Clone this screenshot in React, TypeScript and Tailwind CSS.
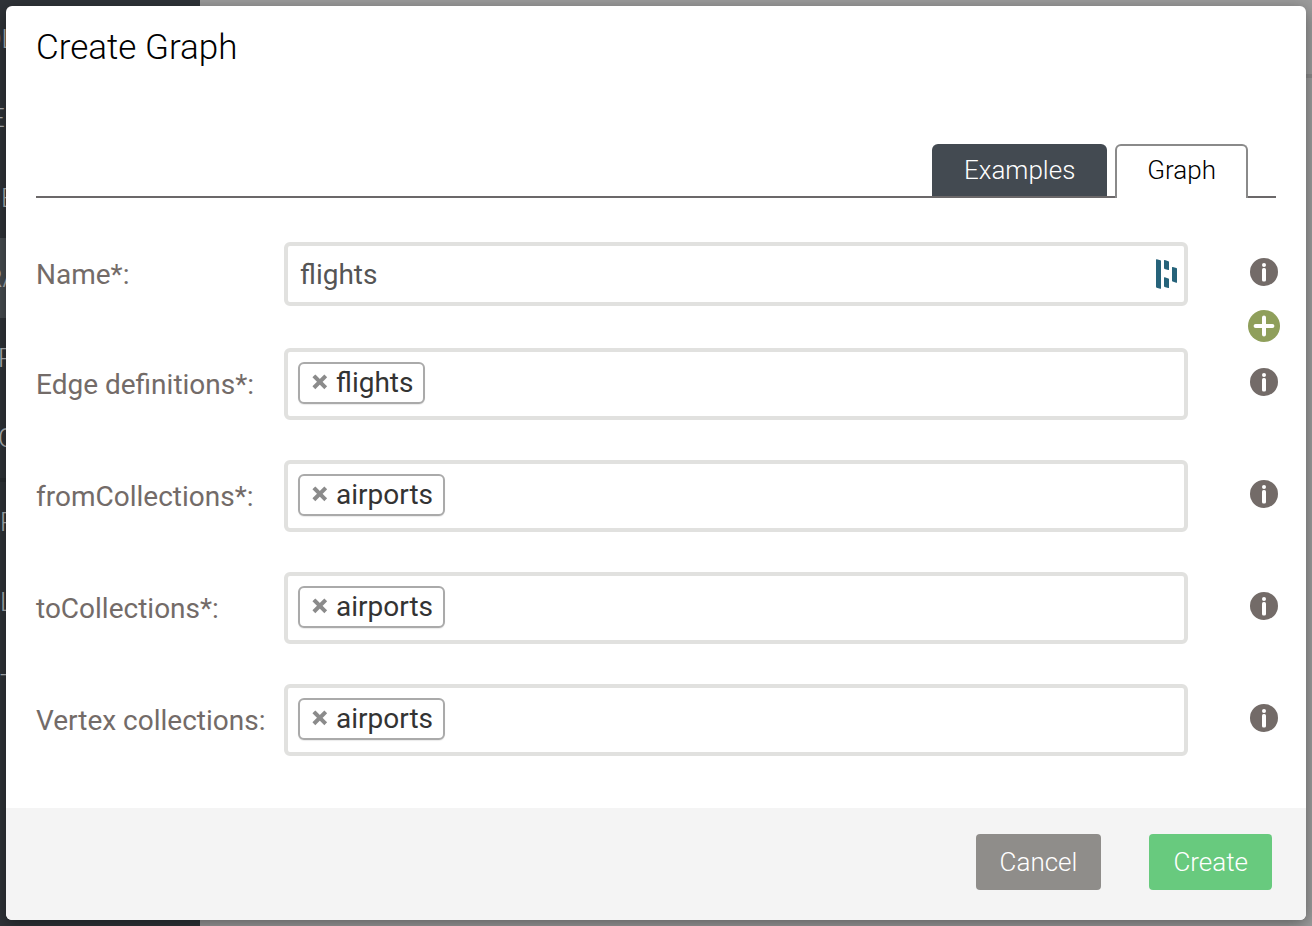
import { useState } from 'react';

const edgeItems = [
  { text: 'OL', row: 'h-[78px]', shift: '-ml-4' },
  { text: 'E', row: 'h-20', shift: '-ml-[10px]' },
  { text: 'UE', row: 'h-20', shift: '-ml-4' },
  { text: 'RA', row: 'h-20 bg-[#474c50]', shift: '-ml-[14px]' },
  { text: 'R', row: 'h-20', shift: '-ml-[2px]' },
  { text: 'O', row: 'h-20', shift: '-ml-[2px]' },
  { text: 'R', row: 'h-[84px] border-t-4 border-[#282c30]', shift: '' },
  { text: 'L', row: 'h-20', shift: '' },
  { text: 'T', row: 'h-[84px]', shift: '' },
];

const tagFields = [
  { id: 'edge', label: 'Edge definitions*:', tag: 'flights' },
  { id: 'from', label: 'fromCollections*:', tag: 'airports' },
  { id: 'to', label: 'toCollections*:', tag: 'airports' },
  { id: 'vertex', label: 'Vertex collections:', tag: 'airports' },
];

function InfoIcon() {
  return (
    <svg viewBox="0 0 28 28" className="mx-[2px] block size-7" aria-hidden="true">
      <circle cx="14" cy="14" r="14" fill="#736b68" />
      <circle cx="14" cy="7" r="2" fill="#fff" />
      <rect x="12" y="10" width="4" height="13.5" rx="1.6" fill="#fff" />
    </svg>
  );
}

function PlusIcon() {
  return (
    <svg viewBox="0 0 32 32" className="block size-8" aria-hidden="true">
      <circle cx="16" cy="16" r="16" fill="#8f9f5b" />
      <path d="M16 7.600v16.800M7.600 16h16.800" stroke="#fff" strokeWidth="4" strokeLinecap="round" />
    </svg>
  );
}

function RemoveIcon() {
  return (
    <svg viewBox="0 0 16 16" className="mb-[2px] block size-4" aria-hidden="true">
      <path
        d="M2.600 2.600 13 13M13 2.600 2.600 13"
        stroke="#8b8b8b"
        strokeWidth="4.600"
        strokeLinecap="square"
        strokeLinejoin="round"
        transform="translate(1 1) scale(.87)"
      />
    </svg>
  );
}

function FillIcon() {
  return (
    <svg viewBox="0 0 22 30" className="block h-[30px] w-[22px]" aria-hidden="true">
      <path
        fill="#26637a"
        d="M0 .8Q0 0 .8.2L4.400 1.300Q5 1.500 5 2.200V29.300Q5 30 4.200 29.800L.6 28.700Q0 28.500 0 27.800ZM8 1.500Q8 .8 8.800 1L12.400 2.200Q13 2.400 13 3V10.500Q13 11.300 12.200 11L8.600 10Q8 9.800 8 9.100ZM8 18.800Q8 18.100 8.800 18.300L12.400 19.500Q13 19.700 13 20.300V28.500Q13 29.300 12.200 29L8.600 27.900Q8 27.700 8 27ZM16 8.500Q16 7.800 16.800 8L20.400 9Q21 9.200 21 9.900V23.200Q21 24 20.200 23.700L16.600 22.600Q16 22.400 16 21.700Z"
      />
    </svg>
  );
}

function InfoButton({ label }: { label: string }) {
  return (
    <button type="button" aria-label={label} className="justify-self-end pb-1">
      <InfoIcon />
    </button>
  );
}

const rowGrid = 'grid grid-cols-[248px_1fr_92px] items-center';
const labelStyle = 'pt-[2px] text-[28px] leading-8 text-[#736b68]';

export default function App() {
  const [name, setName] = useState('flights');

  return (
    <div className="relative flex min-h-screen bg-[#9c9c9c] font-['Roboto',sans-serif]">
      <nav className="w-[200px] shrink-0 overflow-hidden bg-[#2f3338] text-[26px] leading-8 font-light text-[#b0b3b5]">
        <ul>
          {edgeItems.map((item, i) => (
            <li key={i} className={`flex items-center ${item.row}`}>
              <span className={item.shift}>{item.text}</span>
            </li>
          ))}
        </ul>
      </nav>
      <div className="flex-1">
        <div className="box-content h-[74px] border-b-4 border-[#8b8b8b]" />
      </div>

      <div className="absolute inset-0 p-[6px]">
        <form
          role="dialog"
          aria-labelledby="dialog-title"
          onSubmit={(e) => e.preventDefault()}
          className="flex min-h-full flex-col overflow-hidden rounded-md bg-white shadow-[0_4px_16px_rgba(0,0,0,0.4)]"
        >
          <h1 id="dialog-title" className="px-[30px] pt-5 text-[35px] leading-11 font-light text-black">
            Create Graph
          </h1>

          <div className="mx-[30px] mt-[74px] flex justify-end border-b-2 border-[#6b6869] pr-7" role="tablist">
            <button
              type="button"
              role="tab"
              aria-selected="false"
              className="mr-2 h-[52px] rounded-t-md bg-[#434a51] px-8 text-[26px] leading-8 font-light text-white"
            >
              Examples
            </button>
            <button
              type="button"
              role="tab"
              aria-selected="true"
              className="-mb-[2px] h-[54px] rounded-t-md border-2 border-b-0 border-[#8a8a8a] bg-white px-[30px] pb-1 text-[26px] leading-8 font-light text-black"
            >
              Graph
            </button>
          </div>

          <div className="pt-11 pr-[26px] pb-[52px] pl-[30px]">
            <div className={rowGrid}>
              <label htmlFor="name" className={labelStyle}>
                Name*:
              </label>
              <div className="flex h-16 items-center rounded-md border-4 border-[#e1e1df] pr-[6px] pl-3">
                <input
                  id="name"
                  value={name}
                  onChange={(e) => setName(e.target.value)}
                  className="min-w-0 flex-1 bg-transparent pt-[2px] text-[28px] leading-8 text-[#555555] outline-none"
                />
                <FillIcon />
              </div>
              <InfoButton label="About name" />
            </div>
            <div className="flex h-[42px] items-center justify-end pb-[2px]">
              <button type="button" aria-label="Add edge definition">
                <PlusIcon />
              </button>
            </div>
            <div className="flex flex-col gap-10">
              {tagFields.map((field) => (
                <div key={field.id} className={rowGrid}>
                  <label htmlFor={field.id} className={labelStyle}>
                    {field.label}
                  </label>
                  <div className="flex h-[72px] items-center rounded-md border-4 border-[#e1e1df] px-[10px] pb-[2px]">
                    <span className="flex h-[42px] items-center gap-2 rounded-md border-2 border-[#aaaaaa] bg-white pr-[10px] pl-3 text-[28px] leading-8 text-[#333333] shadow-[0_1px_1px_rgba(0,0,0,0.08)]">
                      <button type="button" aria-label={`Remove ${field.tag}`}>
                        <RemoveIcon />
                      </button>
                      {field.tag}
                    </span>
                    <input id={field.id} className="ml-2 min-w-0 flex-1 bg-transparent text-[28px] leading-8 outline-none" />
                  </div>
                  <InfoButton label={`About ${field.label}`} />
                </div>
              ))}
            </div>
          </div>

          <div className="flex flex-1 items-start justify-end gap-12 bg-[#f4f4f4] px-[34px] pt-[26px] pb-[30px]">
            <button type="button" className="h-14 rounded-sm bg-[#8f8d8a] px-6 text-[26px] leading-8 font-light text-white">
              Cancel
            </button>
            <button type="submit" className="h-14 rounded-sm bg-[#68ca7e] px-6 text-[26px] leading-8 font-light text-white">
              Create
            </button>
          </div>
        </form>
      </div>
    </div>
  );
}
